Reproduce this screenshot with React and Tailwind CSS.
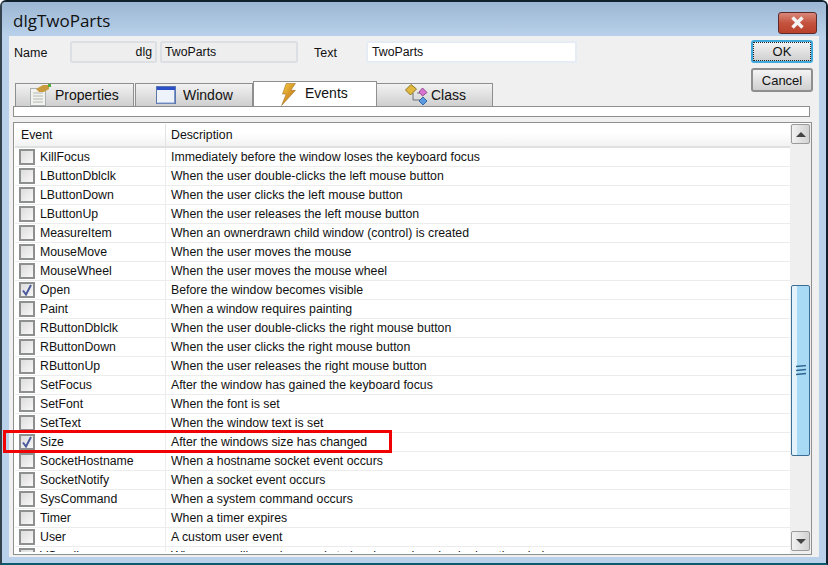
import React from "react";

const events = [
  ["KillFocus", "Immediately before the window loses the keyboard focus"],
  ["LButtonDblclk", "When the user double-clicks the left mouse button"],
  ["LButtonDown", "When the user clicks the left mouse button"],
  ["LButtonUp", "When the user releases the left mouse button"],
  ["MeasureItem", "When an ownerdrawn child window (control) is created"],
  ["MouseMove", "When the user moves the mouse"],
  ["MouseWheel", "When the user moves the mouse wheel"],
  ["Open", "Before the window becomes visible", true],
  ["Paint", "When a window requires painting"],
  ["RButtonDblclk", "When the user double-clicks the right mouse button"],
  ["RButtonDown", "When the user clicks the right mouse button"],
  ["RButtonUp", "When the user releases the right mouse button"],
  ["SetFocus", "After the window has gained the keyboard focus"],
  ["SetFont", "When the font is set"],
  ["SetText", "When the window text is set"],
  ["Size", "After the windows size has changed", true],
  ["SocketHostname", "When a hostname socket event occurs"],
  ["SocketNotify", "When a socket event occurs"],
  ["SysCommand", "When a system command occurs"],
  ["Timer", "When a timer expires"],
  ["User", "A custom user event"],
  ["VScroll", "When a scrollbar value needs to be changed or checked on the window"],
];

function Checkbox({ checked }) {
  return (
    <span className="flex h-4 w-4 shrink-0 items-center justify-center border-2 border-[#8e8f8f] bg-gradient-to-br from-[#dcdcdc] to-[#f8f8f8]">
      {checked && (
        <svg width="12" height="12" viewBox="0 0 12 12">
          <path d="M2 6.5 L5 10.5 L10 1" fill="none" stroke="#4a5a9c" strokeWidth="2" />
        </svg>
      )}
    </span>
  );
}

function EventRow({ name, text, checked }) {
  return (
    <div className="flex h-[19px] shrink-0 items-center border-b border-[#ececec]">
      <div className="flex w-[150px] shrink-0 items-center gap-[5px] pl-[4px]">
        <Checkbox checked={checked} />
        <span>{name}</span>
      </div>
      <div className="h-full w-px shrink-0 bg-[#ececec]" />
      <div className="whitespace-nowrap pl-[5px]">{text}</div>
    </div>
  );
}

function PropsIcon() {
  return (
    <svg width="24" height="22" viewBox="0 0 24 22">
      <rect x="1.5" y="4.5" width="15" height="17" fill="#f3f3ee" stroke="#a9b0b5" />
      <path d="M4 9h10M4 12h10M4 15h10M4 18h10" stroke="#b4b8b8" />
      <path d="M7 5 L14 1 L20 1 L20 5 L15 8 L10 8Z" fill="#c99a3e" />
      <rect x="19" y="0" width="3" height="3" fill="#4fae3c" />
    </svg>
  );
}

function WindowIcon() {
  return (
    <svg width="20" height="18" viewBox="0 0 20 18">
      <rect x="0.5" y="0.5" width="19" height="17" fill="#eef2fb" stroke="#5a76ae" />
      <rect x="1" y="1" width="18" height="3" fill="#2b50c8" />
      <path d="M18.5 4v13h-17" fill="none" stroke="#7d96c8" />
    </svg>
  );
}

function BoltIcon() {
  return (
    <svg width="17" height="23" viewBox="0 0 17 25">
      <defs>
        <linearGradient id="bolt" x1="0" y1="0" x2="1" y2="1">
          <stop offset="0" stopColor="#f8cf45" />
          <stop offset="1" stopColor="#b8620f" />
        </linearGradient>
      </defs>
      <path d="M6 0.5 L16 0.5 L11 8 L16 8 L1 24.5 L6 12 L2 12Z" fill="url(#bolt)" stroke="#9a6a1a" strokeWidth="0.6" />
    </svg>
  );
}

function ClassIcon() {
  return (
    <svg width="24" height="22" viewBox="0 0 24 22">
      <path d="M8 9 V16 H15" fill="none" stroke="#6a7078" />
      <path d="M12 9 H15" stroke="#6a7078" />
      <path d="M6 0.5 L11.5 5 L5.5 11 L0.5 6Z" fill="#e2b93c" stroke="#8c7420" />
      <path d="M17.5 4 L22 8.5 L17.5 12 L14 8Z" fill="#d874d0" stroke="#9a4a98" />
      <path d="M18 13 L22 17 L18 21 L14 17Z" fill="#5b9ae0" stroke="#356aa8" />
    </svg>
  );
}

function Tab({ label, icon, className, gap }) {
  return (
    <div className={`flex h-[23px] items-center border-x border-t border-[#8e8f8f] bg-gradient-to-b from-[#f2f2f2] to-[#cfcfcf] text-[14px] ${className}`}>
      {icon}
      <span className={gap}>{label}</span>
    </div>
  );
}

function Field({ children, className }) {
  return (
    <div className={`flex h-[22px] items-center rounded-[2px] border-2 ${className}`}>
      {children}
    </div>
  );
}

export default function App() {
  return (
    <div className="relative flex h-[565px] w-[828px] flex-col overflow-hidden rounded-t-[6px] border-2 border-[#10202c] border-b-[#0c5a6e] border-l-[#33424c] bg-[#b9d1ea] font-['Liberation_Sans',Arial,sans-serif] text-[12.3px] text-[#111]">
      <div className="flex h-[34px] shrink-0 items-center justify-between bg-gradient-to-b from-[#9cb7d3] to-[#b9d1ea] pl-[11px] pr-[9px]">
        <span className="pt-[2px] font-['Open_Sans',sans-serif] text-[17px] leading-none">dlgTwoParts</span>
        <div className="mt-[7px] flex h-[22px] w-[39px] items-center justify-center rounded-[3px] border border-[#5c2a2a] bg-gradient-to-b from-[#d9877a] via-[#c4533e] to-[#b8402c]">
          <svg width="15" height="13" viewBox="0 0 15 13">
            <path d="M2.5 1.5 L12.5 11.5 M12.5 1.5 L2.5 11.5" stroke="#f4f4f4" strokeWidth="3.4" />
          </svg>
        </div>
      </div>

      <div className="mx-[7px] mb-[6px] flex min-h-0 flex-1 flex-col bg-[#f0f0f0]">
        <div className="flex h-[45px] shrink-0 pl-[5px] pr-[5px] pt-[5px]">
          <span className="w-[56px] pt-[3px] text-[12.5px]">Name</span>
          <Field className="w-[87px] justify-end border-[#dcdfe4] bg-[#eeeeee] pr-[3px]">dlg</Field>
          <Field className="ml-[3px] w-[138px] border-[#dcdfe4] bg-[#eeeeee] pl-[3px]">TwoParts</Field>
          <span className="ml-[16px] w-[52px] pt-[3px] text-[12.5px]">Text</span>
          <Field className="w-[211px] border-[#e6ecf4] bg-white pl-[4px]">TwoParts</Field>
        </div>

        <div className="absolute right-[13px] top-[38px] flex w-[62px] flex-col gap-[5px] text-[13px]">
          <button className="h-[23px] rounded-[3px] border-2 border-[#3fa9dc] bg-gradient-to-b from-[#f4f4f4] to-[#cfcfcf] leading-none outline-1 -outline-offset-3 outline-dotted outline-[#222]">OK</button>
          <button className="h-[24px] rounded-[3px] border-2 border-[#8e8f8f] bg-gradient-to-b from-[#f4f4f4] to-[#cfcfcf] leading-none">Cancel</button>
        </div>

        <div className="flex h-[25px] shrink-0 items-end pl-[6px]">
          <Tab label="Properties" icon={<PropsIcon />} className="w-[119px] pl-[13px]" gap="ml-[2px]" />
          <Tab label="Window" icon={<WindowIcon />} className="ml-px w-[118px] pl-[20px]" gap="ml-[7px]" />
          <div className="flex h-[25px] w-[124px] items-center border-x border-t border-[#8e8f8f] bg-white pl-[26px] text-[14px]">
            <BoltIcon />
            <span className="mb-[1px] ml-[8px]">Events</span>
          </div>
          <Tab label="Class" icon={<ClassIcon />} className="w-[116px] border-l-0 pl-[28px]" gap="ml-[2px]" />
        </div>

        <div className="ml-[4px] mr-[9px] h-[11px] w-[797px] shrink-0 border border-[#8e8f8f] bg-white" />

        <div className="mb-[2px] ml-[4px] mr-[7px] mt-[5px] flex min-h-0 flex-1 border border-[#8e8f8f] bg-white pl-px pt-px">
          <div className="mb-[2px] flex min-w-0 flex-1 flex-col overflow-hidden">
            <div className="flex h-[24px] shrink-0 border-b-2 border-[#dfe0e2] bg-gradient-to-b from-white from-40% to-[#f2f2f3]">
              <div className="w-[150px] pl-[6px] pt-[2px]">Event</div>
              <div className="h-full w-px bg-[#e3e3e3]" />
              <div className="pl-[5px] pt-[2px]">Description</div>
            </div>
            {events.map(([name, text, checked]) => (
              <EventRow key={name} name={name} text={text} checked={checked} />
            ))}
          </div>
          <div className="flex w-[21px] shrink-0 flex-col bg-[#efefef] pb-[3px] pl-px pr-px">
            <div className="flex h-[20px] shrink-0 items-center justify-center rounded-[2px] border border-[#9a9a9a] bg-gradient-to-r from-[#f2f2f2] to-[#d2d2d2]">
              <span className="h-0 w-0 border-x-[5px] border-b-[5px] border-x-transparent border-b-[#444]" />
            </div>
            <div className="h-[141px] shrink-0" />
            <div className="flex h-[171px] shrink-0 items-center justify-center rounded-[2px] border border-[#3c6d94] bg-gradient-to-r from-[#e3f2fb] from-30% to-[#a9daf5] to-30%">
              <svg width="10" height="11" viewBox="0 0 10 11">
                <path d="M0 1.5 L10 0.5 M0 5.5 L10 4.5 M0 9.5 L10 8.5" stroke="#2d6690" strokeWidth="1.4" />
              </svg>
            </div>
            <div className="flex-1" />
            <div className="flex h-[20px] shrink-0 items-center justify-center rounded-[2px] border border-[#9a9a9a] bg-gradient-to-r from-[#f2f2f2] to-[#d2d2d2]">
              <span className="h-0 w-0 border-x-[5px] border-t-[5px] border-x-transparent border-t-[#444]" />
            </div>
          </div>
        </div>
      </div>

      <div className="absolute left-[1px] top-[428px] h-[23px] w-[389px] border-[3px] border-[#f00000]" />
    </div>
  );
}
